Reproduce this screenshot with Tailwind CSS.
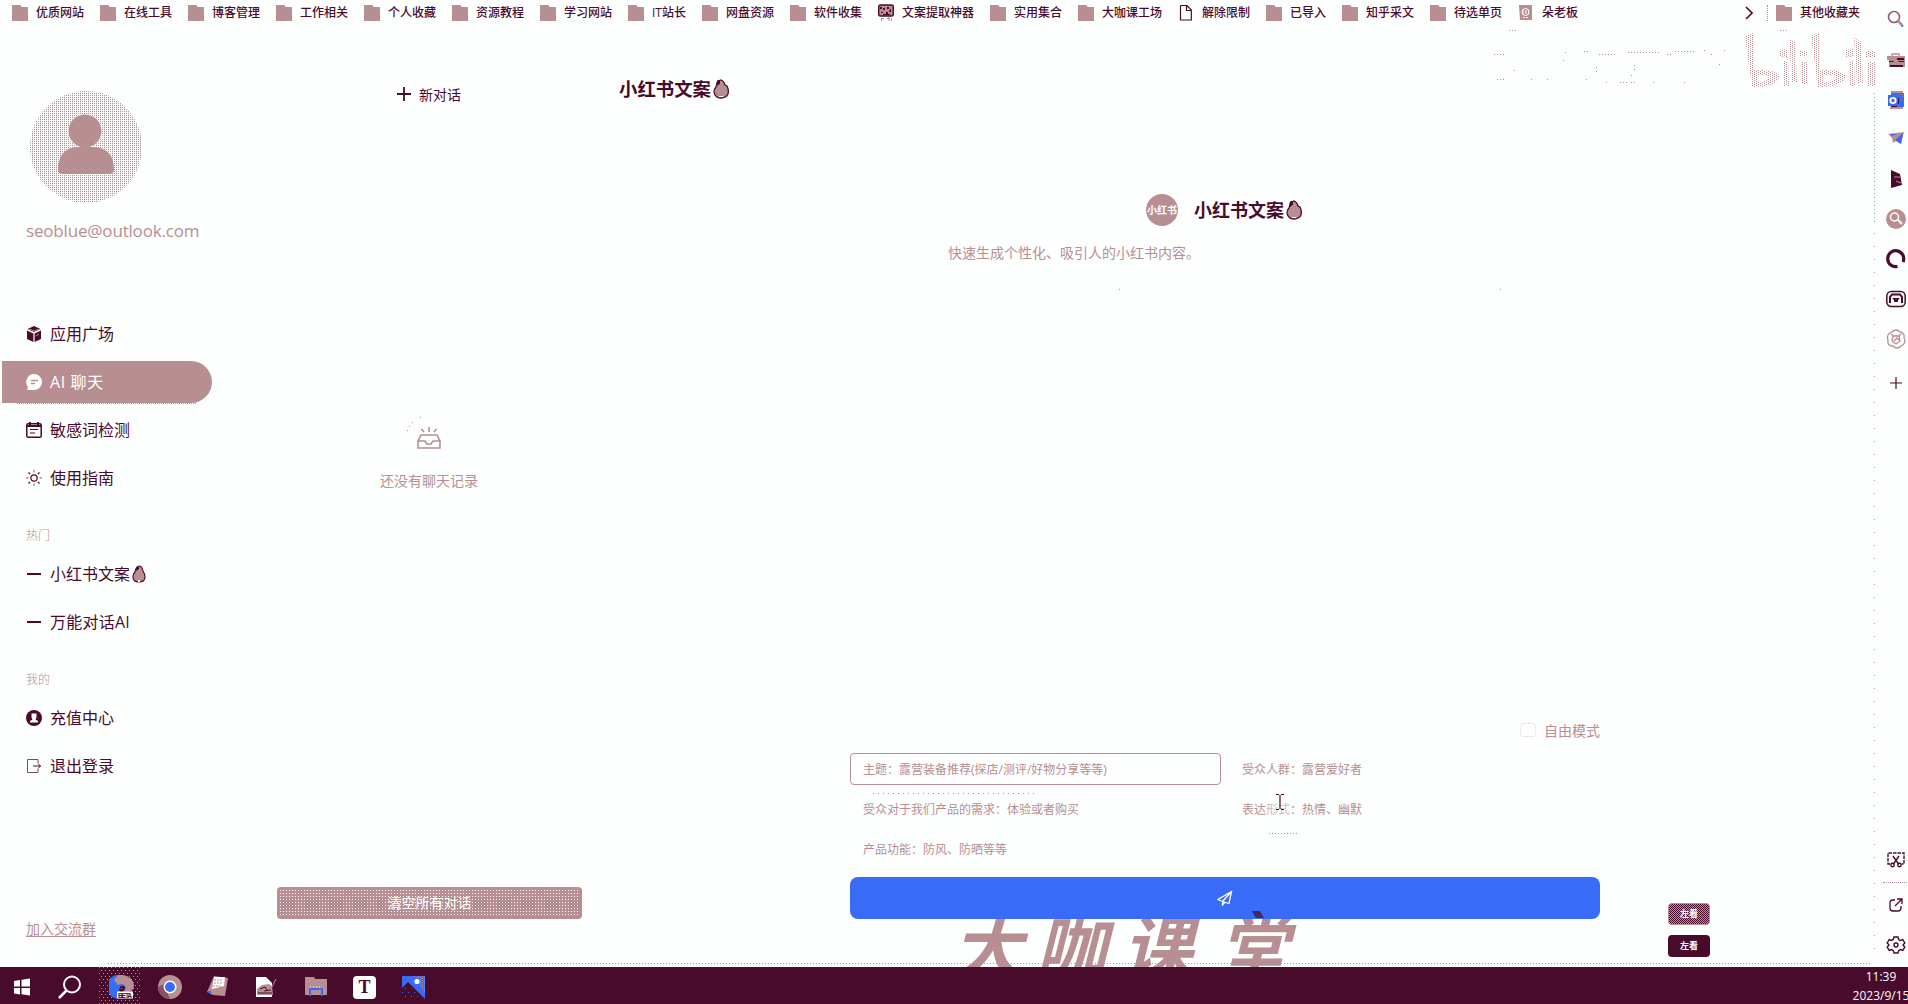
<!DOCTYPE html>
<html lang="zh-CN">
<head>
<meta charset="utf-8">
<title>小红书文案</title>
<script src="https://cdn.jsdelivr.net/npm/@tailwindcss/browser@4"></script>
</head>
<body class="w-[1908px] h-[1004px] overflow-hidden bg-[#fdfefe] text-[#490b2b] font-['Open_Sans','Noto_Sans_CJK_SC',sans-serif]">
<svg class="absolute w-0 h-0" aria-hidden="true">
  <defs>
    <pattern id="dots" width="4" height="2" patternUnits="userSpaceOnUse"><path d="M0 0h1v1H0zM2 1h1v1H2z" fill="#b78f92"/></pattern>
    <pattern id="mesh" width="2" height="2" patternUnits="userSpaceOnUse"><path d="M0 0h1v1H0z" fill="#b78f92"/></pattern>
    <pattern id="check" width="2" height="2" patternUnits="userSpaceOnUse"><path d="M0 0h1v1H0zM1 1h1v1H1z" fill="#b78f92"/></pattern>
    <pattern id="holes" width="3" height="3" patternUnits="userSpaceOnUse"><path d="M1 1h1v1H1z" fill="#fdfefe"/></pattern>
    <pattern id="grain" width="4" height="6" patternUnits="userSpaceOnUse"><path d="M0 0h1v1H0zM2 3h1v1H2z" fill="#b78f92"/></pattern>
    <pattern id="blue" width="6" height="8" patternUnits="userSpaceOnUse"><path d="M0 0h1v1H0zM3 4h1v1H3z" fill="#386cf7"/></pattern>
    <symbol id="folder" viewBox="0 0 16 17"><path d="M0 1h8l2 2h6v14H0z" fill="#b78f92"/></symbol>
    <symbol id="egg" viewBox="0 0 16 20"><path d="M5 2L8 1q3 1 4 5l2 1q2 4 1 8-2 4-7 4-6 0-7-6 0-3 2-5z" fill="#b78f92" stroke="#490b2b" stroke-width="1.3"/><path d="M4 1.500h3v3L4 7 3 6z" fill="#490b2b"/><path d="M6 17h4v1H6z" fill="#fdfefe"/></symbol>
    <symbol id="egg2" viewBox="0 0 14 18"><path d="M7 1q3 0 4 5 2 3 2 6 0 5-6 5t-6-5q0-3 2-5Q4 1 7 1z" fill="#b78f92" stroke="#490b2b" stroke-width="1.2"/><path d="M4 2h3v2L4 6z" fill="#490b2b"/><path d="M6 15h2v2H6z" fill="#fdfefe"/></symbol>
  </defs>
</svg>
<div class="flex flex-col h-full">
<div class="relative flex h-[967px] overflow-hidden">
  <div class="flex flex-col w-[1875px]">
    <header class="flex items-center h-[25px] pl-3 gap-4 text-[12px] leading-[24px] font-medium whitespace-nowrap">
      <div class="flex items-center gap-2"><svg class="w-4 h-[17px]"><use href="#folder"/></svg><span class="w-12">优质网站</span></div>
      <div class="flex items-center gap-2"><svg class="w-4 h-[17px]"><use href="#folder"/></svg><span class="w-12">在线工具</span></div>
      <div class="flex items-center gap-2"><svg class="w-4 h-[17px]"><use href="#folder"/></svg><span class="w-12">博客管理</span></div>
      <div class="flex items-center gap-2"><svg class="w-4 h-[17px]"><use href="#folder"/></svg><span class="w-12">工作相关</span></div>
      <div class="flex items-center gap-2"><svg class="w-4 h-[17px]"><use href="#folder"/></svg><span class="w-12">个人收藏</span></div>
      <div class="flex items-center gap-2"><svg class="w-4 h-[17px]"><use href="#folder"/></svg><span class="w-12">资源教程</span></div>
      <div class="flex items-center gap-2"><svg class="w-4 h-[17px]"><use href="#folder"/></svg><span class="w-12">学习网站</span></div>
      <div class="flex items-center gap-2"><svg class="w-4 h-[17px]"><use href="#folder"/></svg><span class="w-[34px]">IT站长</span></div>
      <div class="flex items-center gap-2"><svg class="w-4 h-[17px]"><use href="#folder"/></svg><span class="w-12">网盘资源</span></div>
      <div class="flex items-center gap-2"><svg class="w-4 h-[17px]"><use href="#folder"/></svg><span class="w-12">软件收集</span></div>
      <div class="flex items-center gap-2"><svg class="w-4 h-[17px]" viewBox="0 0 16 17"><rect x=".7" y="1" width="14.6" height="11" rx="1.5" fill="#b78f92" stroke="#490b2b" stroke-width="1.4"/><path d="M2 3h2v2H2zM5 4h2v2H5zM9 3h2v2H9zM12 5h1v3h-2zM3 8h2v1H3zM8 8h2v2H8zM5 10h7v1H5z" fill="#490b2b"/><path d="M3.500 14v3M3 14.500h3M9 14.500h3M11 13v4M13.500 14v3" stroke="#b78f92"/></svg><span class="w-[72px]">文案提取神器</span></div>
      <div class="flex items-center gap-2"><svg class="w-4 h-[17px]"><use href="#folder"/></svg><span class="w-12">实用集合</span></div>
      <div class="flex items-center gap-2"><svg class="w-4 h-[17px]"><use href="#folder"/></svg><span class="w-[60px]">大咖课工场</span></div>
      <div class="flex items-center gap-2"><svg class="w-4 h-[17px]" viewBox="0 0 16 17"><path d="M3 1.500h6L13.300 6v10H2.500V2zM8.500 1.500V6.500H13" fill="none" stroke="#490b2b" stroke-width="1.2"/></svg><span class="w-12">解除限制</span></div>
      <div class="flex items-center gap-2"><svg class="w-4 h-[17px]"><use href="#folder"/></svg><span class="w-9">已导入</span></div>
      <div class="flex items-center gap-2"><svg class="w-4 h-[17px]"><use href="#folder"/></svg><span class="w-12">知乎采文</span></div>
      <div class="flex items-center gap-2"><svg class="w-4 h-[17px]"><use href="#folder"/></svg><span class="w-12">待选单页</span></div>
      <div class="flex items-center gap-2"><svg class="w-4 h-[17px]" viewBox="0 0 16 17"><path d="M1 1h13v15H2z" fill="#b78f92"/><circle cx="7.500" cy="8" r="3.500" fill="none" stroke="#fdfefe"/><path d="M4 7h7M4 9h7M5 13.500h6" stroke="#fdfefe" stroke-dasharray="2 1"/></svg><span class="w-9">朵老板</span></div>
      <div class="flex items-center ml-auto pr-[14px]">
        <svg class="w-2 h-3.5" viewBox="0 0 8 14"><path d="M1 1l6 6-6 6" fill="none" stroke="#490b2b" stroke-width="1.6"/></svg>
        <span class="h-4 ml-[14px] mr-2 border-l border-dotted border-[#b78f92]"></span>
        <svg class="w-4 h-[17px] mr-2"><use href="#folder"/></svg><span class="w-[61px]">其他收藏夹</span>
      </div>
    </header>
    <div class="flex flex-1 min-h-0">
      <aside class="flex flex-col w-[214px] pt-[66px]">
        <svg class="w-28 h-28 ml-[30px]" viewBox="0 0 112 112"><circle cx="56" cy="56" r="56" fill="url(#mesh)"/><circle cx="56" cy="56" r="56" fill="url(#dots)" opacity=".25"/><ellipse cx="55" cy="40" rx="17" ry="17" fill="#fdfefe"/><circle cx="55" cy="40" r="16.500" fill="#b78f92"/><path d="M28 79q0-22 20-23h16q20 1 20 23 0 4-5 4H33q-5 0-5-4z" fill="#b78f92"/></svg>
        <div class="mt-[16px] ml-[26px] h-6 leading-6 text-[17px] text-[#b78f92] whitespace-nowrap tracking-[-0.18px]">seoblue@outlook.com</div>
        <nav class="mt-[67px] text-[16px] whitespace-nowrap">
          <a class="flex items-center h-12 pl-[26px] gap-2"><svg class="w-4 h-4" viewBox="0 0 16 16"><path d="M8 0l6.500 3L8 6 1.500 3zM1 4.500l6.400 3V16L1 13zM15 4.500l-6.400 3V16l6.400-3z" fill="#490b2b"/><path d="M3 3l5 2 5-2M10 10l3-2" stroke="#b78f92" fill="none"/></svg>应用广场</a>
          <a class="flex items-center w-[210px] h-[42px] my-[3px] ml-0.5 pl-[24px] gap-2 rounded-r-full bg-[#b78f92] text-[#fdfefe]"><svg class="w-4 h-4" viewBox="0 0 16 16"><path d="M8 0a8 8 0 1 1 0 16H1l1-3A8 8 0 0 1 8 0z" fill="#fdfefe"/><path d="M5 6.500h7M5 9.500h4" stroke="#b78f92" stroke-width="1.300"/></svg><span class="tracking-[0.6px]">AI 聊天</span></a>
          <a class="flex items-center h-12 pl-[26px] gap-2"><svg class="w-4 h-4" viewBox="0 0 16 16" fill="none" stroke="#490b2b" stroke-width="1.500"><rect x=".8" y="1.800" width="14.400" height="13.400" rx="1.500"/><path d="M1 4h14M4 0v4M12 0v4" stroke-width="2"/><path d="M4 7.500h8M4 11h5" stroke-width="1.200"/></svg>敏感词检测</a>
          <a class="flex items-center h-12 pl-[26px] gap-2"><svg class="w-4 h-4" viewBox="0 0 16 16" fill="none" stroke="#490b2b" stroke-width="1.200"><circle cx="8" cy="8" r="3.200"/><path d="M8 0v2.500M8 13.500V16M0 8h2.500M13.500 8H16" stroke="#b78f92" stroke-width="1.500"/><path d="M2.500 2.500l1.500 1.500M12 12l1.500 1.500M2.500 13.500L4 12M12 4l1.500-1.500"/></svg>使用指南</a>
          <p class="h-12 pt-[22px] pl-[26px] leading-[24px] text-[12px] font-light text-[#b78f92]">热门</p>
          <a class="flex items-center h-12 pl-[27px] gap-[9px]"><span class="w-[14px] h-[2px] bg-[#490b2b]"></span><span class="flex items-center gap-0.5">小红书文案<svg class="w-3.5 h-[18px]"><use href="#egg2"/></svg></span></a>
          <a class="flex items-center h-12 pl-[27px] gap-[9px]"><span class="w-[14px] h-[2px] bg-[#490b2b]"></span><span class="tracking-[0.25px]">万能对话AI</span></a>
          <p class="h-12 pt-[22px] pl-[26px] leading-[24px] text-[12px] font-light text-[#b78f92]">我的</p>
          <a class="flex items-center h-12 pl-[26px] gap-2"><svg class="w-4 h-4" viewBox="0 0 16 16"><circle cx="8" cy="8" r="8" fill="#490b2b"/><path d="M5.500 3.500h5v4l-1 2 2.500 1.500v1.500H4V11l2.500-1.500-1-2z" fill="#fdfefe"/></svg>充值中心</a>
          <a class="flex items-center h-12 pl-[26px] gap-2"><svg class="w-4 h-4" viewBox="0 0 16 16" fill="none" stroke="#490b2b" stroke-width="1"><path d="M12 5V1.500H1.500v13H12V11" stroke="#7d4c60"/><path d="M7 8h7.500M12 5.500L14.500 8 12 10.500"/></svg>退出登录</a>
        </nav>
        <a class="mt-auto mb-[25px] ml-[26px] h-[26px] leading-[26px] text-[14px] text-[#b78f92] underline underline-offset-2">加入交流群</a>
      </aside>
      <section class="flex flex-col items-center w-[430px]">
        <button class="flex items-center gap-[8px] mt-[56px] h-[26px] text-[14px]"><svg class="w-3.5 h-3.5" viewBox="0 0 14 14"><path d="M7 0v14M0 7h14" stroke="#490b2b" stroke-width="1.800"/></svg>新对话</button>
        <svg class="w-6 h-[22px] mt-[320px]" viewBox="0 0 24 22" fill="none" stroke="#b78f92" stroke-width="1.600"><path d="M12 0v5M4.500 2l2.500 3M19.500 2L17 5"/><path d="M1 21V14l3-6h16l3 6v7zM1 14h7l2 3h4l2-3h7"/></svg>
        <p class="mt-[19px] h-[26px] leading-[26px] text-[14px] text-[#b78f92]">还没有聊天记录</p>
        <button class="relative flex items-center justify-center w-[305px] h-8 mt-auto mb-12 ml-px rounded bg-[#b78f92] text-[#fdfefe] text-[14px]"><svg class="absolute left-0.5 top-0.5 w-[301px] h-[28px]"><rect width="301" height="28" fill="url(#holes)"/></svg><span class="relative pb-0.5">清空所有对话</span></button>
      </section>
      <main class="flex flex-col flex-1">
        <h1 class="self-start flex items-center gap-[2px] mt-[50px] h-[28px] -ml-[25px] font-bold text-[18.4px]">小红书文案<svg class="w-4 h-5"><use href="#egg"/></svg></h1>
        <div class="flex items-center w-[158px] mt-[91px] ml-[502px] h-8 whitespace-nowrap font-bold text-[18px]">
          <span class="flex items-center justify-center shrink-0 w-8 h-8 mr-4 rounded-full bg-[#b78f92] text-[#fdfefe] text-[10px] leading-none">小红书</span>小红书文案<svg class="w-4 h-5 ml-0.5 shrink-0"><use href="#egg"/></svg>
        </div>
        <p class="mt-[14px] h-[26px] leading-[26px] ml-[304px] text-[14px] text-[#b78f92]">快速生成个性化、吸引人的小红书内容。</p>
        <div class="flex flex-col w-[750px] ml-[206px] mt-auto mb-12 relative">
          <label class="flex self-end items-center gap-2 mb-[9px] h-7 text-[14px] text-[#b78f92]"><span class="w-4 h-3.5 border border-dotted border-[#e2d2d3] rounded"></span>自由模式</label>
          <div class="grid grid-cols-[371px_371px] gap-x-2 gap-y-2 text-[12px] text-[#b78f92] font-normal">
            <div class="flex items-center h-8 px-3 pt-0.5 rounded border border-[#b78f92]">主题：露营装备推荐(探店/测评/好物分享等等)</div>
            <div class="flex items-center h-8 px-[13px] pt-0.5">受众人群：露营爱好者</div>
            <div class="flex items-center h-8 px-[13px] pt-0.5">受众对于我们产品的需求：体验或者购买</div>
            <div class="flex items-center h-8 px-[13px] pt-0.5">表达<span class="opacity-60">形式</span>：热情、幽默</div>
            <div class="flex items-center h-8 px-[13px] pt-0.5">产品功能：防风、防晒等等</div>
          </div>
          <button class="relative z-10 flex items-center justify-center h-[42px] mt-3 rounded-lg bg-[#386cf7]"><svg class="w-4 h-4" viewBox="0 0 16 16" fill="none" stroke="#fdfefe" stroke-width="1.300"><path d="M14.500 1.500L1 9.500l4.500 2 6.500 2zM5.500 11.500l9-10M5.500 11.500V15l2.500-2.800"/></svg></button>
          <svg class="absolute left-[23px] top-[77px] w-[162px] h-px"><path d="M0 .5h162" stroke="#b78f92" stroke-dasharray="1 4"/></svg>
          <svg class="absolute left-[419px] top-[117px] w-[28px] h-px"><path d="M0 .5h28" stroke="#b78f92" stroke-dasharray="1 2"/></svg>
          <svg class="absolute left-[426px] top-[78px] w-2 h-4" viewBox="0 0 8 16"><path d="M0 .5h3M5 .5h3M4 1v14M0 15.500h3M5 15.500h3" stroke="#490b2b" stroke-width="1.200"/></svg>
        </div>
      </main>
    </div>
  </div>
  <aside class="flex flex-col items-center w-[33px] pl-[9px] pt-[9px]">
    <svg class="w-5 h-5" viewBox="0 0 20 20"><circle cx="8" cy="8" r="5.500" fill="none" stroke="#8f5f6e" stroke-width="1.600"/><path d="M12 12l4 4" stroke="#b78f92" stroke-width="2.500"/><path d="M15.500 16l1.500 1.500" stroke="#386cf7" stroke-width="2"/></svg>
    <svg class="w-5 h-5 mt-[21px]" viewBox="0 0 20 20"><path d="M6 7V4h7v3" stroke="#b78f92" fill="none" stroke-width="1.300"/><path d="M1 6h18v11H3V10H1z" fill="#b78f92"/><path d="M11 8h7v2h-7zM3 11h4l1 1h4l1-1h5v1H3zM4 15h13v2H4z" fill="#490b2b"/></svg>
    <svg class="w-5 h-5 mt-[20px]" viewBox="0 0 20 20"><path d="M5 1h12v3H5zM4 17h13v2H4z" fill="#b78f92"/><path d="M5 3h13v14H5zM2 5h10v11H2z" fill="#386cf7"/><circle cx="7" cy="10.500" r="2.700" fill="none" stroke="#fdfefe" stroke-width="1.800"/><path d="M12.500 8v6M5 16.500h6" stroke="#490b2b"/><path d="M13 3h5v5z" fill="url(#mesh)"/></svg>
    <svg class="w-5 h-5 mt-[18px]" viewBox="0 0 20 20"><path d="M2 6l16-2-3 12-5-3-3 2-1-5z" fill="#b78f92"/><path d="M4 6h7l-5 2zM9 12l8-7-2 11z" fill="#386cf7"/></svg>
    <svg class="w-5 h-5 mt-[21px]" viewBox="0 0 20 20"><path d="M5 1l9 4 2 11-11 3z" fill="#490b2b"/><path d="M8 8h6M10 12l5 2" stroke="#b78f92" fill="none"/></svg>
    <svg class="w-5 h-5 mt-[20px]" viewBox="0 0 20 20"><circle cx="10" cy="10" r="10" fill="#b78f92"/><circle cx="8.500" cy="8" r="4" fill="none" stroke="#fdfefe" stroke-width="1.500"/><path d="M12 11l4 4" stroke="#fdfefe" stroke-width="2"/></svg>
    <svg class="w-5 h-5 mt-[20px]" viewBox="0 0 20 20"><path d="M11.500 17.500A8 8 0 1 1 17 13" fill="none" stroke="#490b2b" stroke-width="3.200"/></svg>
    <svg class="w-5 h-5 mt-[20px]" viewBox="0 0 20 20"><rect x=".8" y="2.500" width="18.400" height="15" rx="4.500" fill="none" stroke="#490b2b" stroke-width="1.500"/><path d="M4 14V8l2-2.500h8L16 8v6" fill="none" stroke="#490b2b" stroke-width="2"/><path d="M6 9h8l-2 2v2h-4v-2z" fill="#490b2b"/></svg>
    <svg class="w-5 h-5 mt-[20px]" viewBox="0 0 20 20" fill="none" stroke="#b78f92" stroke-width="1.300"><path d="M6 3q4-4 8 0 5 1 4 6 3 5-3 8-4 4-8 0-6 0-5-6-2-6 4-8z"/><path d="M7 7h6l1 5-4 3-4-3zM8 12l3-3 2 2M5 5l2 2M15 5l-2 2"/></svg>
    <svg class="w-3 h-3 mt-[28px]" viewBox="0 0 12 12"><path d="M6 0v12M0 6h12" stroke="#490b2b" stroke-width="1.200"/></svg>
    <div class="flex flex-col items-center mt-auto mb-[12px]">
      <svg class="w-5 h-5" viewBox="0 0 20 20" fill="none" stroke="#490b2b" stroke-width="1.400"><path d="M4 14H2V3h16v11h-2" stroke-dasharray="3.500 1"/><path d="M7 6l5.500 8M13 6l-5.500 8"/><circle cx="6.500" cy="15" r="1.700"/><circle cx="13.500" cy="15" r="1.700"/></svg>
      <span class="w-[26px] mt-[12px] border-t border-dotted border-[#b78f92]"></span>
      <svg class="w-5 h-5 mt-[12px]" viewBox="0 0 20 20" fill="none" stroke="#490b2b" stroke-width="1.300"><path d="M9 5H7q-3 0-3 3v5q0 3 3 3h5q3 0 3-3v-2M9 11l7-7M11 4h5v5"/></svg>
      <svg class="w-5 h-5 mt-[20px]" viewBox="0 0 20 20" fill="none" stroke="#490b2b" stroke-width="1.400"><circle cx="10" cy="10" r="2"/><path d="M8 2h4l.7 2.500 1.600 1 2.500-.8 2 3.300-1.800 2 1.800 2-2 3.400-2.500-.8-1.600 1L12 18H8l-.7-2.400-1.600-1-2.500.8-2-3.400 1.800-2-1.800-2 2-3.400 2.500.8 1.600-1z"/></svg>
    </div>
  </aside>

  <!-- Translucent overlays: video watermarks and page edge -->
  <div class="absolute left-[952px] top-[898px] flex whitespace-nowrap text-[#b78f92] font-bold text-[70px] leading-[92px] italic font-['Noto_Sans_CJK_SC',sans-serif]"><span class="w-[84px]">大</span><span class="w-[86px]">咖</span><span class="w-[96px]">课</span><span>堂</span></div>
  <svg class="absolute left-[1252px] top-[910px] w-3 h-2 z-20"><path d="M0 1h8l4 7H4z" fill="#490b2b" opacity=".7"/></svg>
  <svg class="absolute left-[1480px] top-[25px] w-[396px] h-[80px]" viewBox="0 0 396 80">
    <path d="M265 11l9-3v37h8q14 0 18 6-4 12-28 11zM278 50v7q8 0 13-5-5-3-13-2z" fill="url(#dots)" fill-rule="evenodd"/>
    <path d="M331 11l9-3v37h8q14 0 18 6-4 12-28 11zM344 50v7q8 0 13-5-5-3-13-2z" fill="url(#dots)" fill-rule="evenodd"/>
    <path d="M299 25l8-1v8h-7zM303 36h5l1 25h-5zM309 13l6 4 2 40h-5zM319 26h8v5h-8zM322 37h5v22h-5zM365 25l8-1v8h-7zM369 36h5l1 25h-5zM374 13l7 4 2 41h-6zM385 26h10v6h-10zM388 37h7v24h-7z" fill="url(#dots)"/>
    <path d="M14 29.500h10M17 54.500h8M29 5.500h7M104 26.500h4M119 29.500h18M148 27.500h32M187 29.500h6M195 26.500h19M300 5.500h7M140 57.500h7M151 57.500h5" stroke="#b78f92" stroke-dasharray="1 2" fill="none"/>
    <path d="M34.500 45v1M51.500 54v1M67.500 54v1M83.500 35v1M85.500 27v1M116.500 42v1M116.500 46v1M154.500 40v1M154.500 44v1M151.500 50v1M173.500 57v1M204.500 57v1M224.500 25v1M231.500 29v1M239.500 39v1M244.500 25v1M126.500 57v1M106.500 54v1" stroke="#b78f92"/>
  </svg>
  <svg class="absolute left-[1874px] top-[93px] w-px h-[868px]"><path d="M.5 0v130" stroke="#b78f92" stroke-dasharray="1 3"/><path d="M.5 140v728" stroke="#b78f92" stroke-dasharray="1 12"/></svg>
  <svg class="absolute left-[108px] top-[963px] w-[1764px] h-px"><path d="M0 .5h1764" stroke="#b78f92" stroke-dasharray="1 2"/></svg>
  <svg class="absolute left-0 top-[403px] w-[200px] h-[2px]"><path d="M17 .5h180" stroke="#b78f92" stroke-dasharray="1 1"/></svg>
  <svg class="absolute left-[406px] top-[416px] w-[16px] h-4"><path d="M1 14h1v1H1zM3 10h1v1H3zM6 6h1v1H6zM14 1h1v1h-1z" fill="#b78f92"/></svg>
  <svg class="absolute left-[1118px] top-[288px] w-[384px] h-[2px]"><path d="M1 1h1v1H1zM382 1h1v1h-1z" fill="#b78f92"/></svg>
  <div class="absolute left-[1668px] top-[903px] flex flex-col gap-2.5 text-[9px] font-bold text-[#fdfefe]">
    <span class="relative flex items-center justify-center w-[42px] h-[22px] rounded overflow-hidden border border-[#b78f92] bg-[#490b2b]"><svg class="absolute inset-0 w-full h-full"><rect width="42" height="22" fill="url(#check)"/></svg><span class="relative">左看</span></span>
    <span class="flex items-center justify-center w-[42px] h-[22px] rounded bg-[#490b2b]">左看</span>
  </div>
</div>
<footer class="flex items-center h-[37px] pl-[10px] bg-[#490b2b] text-[#fdfefe] overflow-hidden">
  <div class="flex items-center pt-[3px]">
    <svg class="w-6 h-6" viewBox="0 0 24 24" fill="#fdfefe"><path d="M4 6l6-1v6.500H4zM11.500 4.700L20 3.500v8h-8.500zM4 13h6v6.500l-6-1zM11.500 13H20v7.500l-8.500-1.200z"/></svg>
    <svg class="w-6 h-6 ml-[24px]" viewBox="0 0 24 24" fill="none" stroke="#fdfefe" stroke-width="2"><circle cx="14" cy="9.500" r="8"/><path d="M8.500 15.500L1 23" stroke-width="2.500"/></svg>
    <div class="relative flex items-center justify-center w-[42px] h-[37px] ml-[17px] -mt-[3px]"><svg class="absolute inset-0 w-full h-full"><rect width="42" height="37" fill="url(#grain)"/></svg>
      <svg class="relative w-[26px] h-6 ml-1 mt-[3px]" viewBox="0 0 26 24"><path d="M12 0A12 12 0 1 0 14 23l-3-4q-2-5 1-8 3-1 4 1l-1 4 5 1q6-4 3-11Q19 0 12 0z" fill="#386cf7"/><path d="M9 0q14-1 16 10 0 6-6 7h-4l2-4q-2-6-8-3L5 5z" fill="#b78f92"/><rect x="8" y="16.500" width="16" height="7" fill="#fdfefe"/><text x="9" y="22.500" font-size="6.500" font-weight="700" fill="#490b2b" font-family="Liberation Sans, sans-serif" textLength="14">BETA</text></svg></div>
    <svg class="w-6 h-6 ml-[17px]" viewBox="0 0 24 24"><circle cx="12" cy="12" r="12" fill="#b78f92"/><path d="M0 12l8-4 1 9 3 7Q1 23 0 12z" fill="#490b2b" opacity=".45"/><circle cx="12" cy="12" r="6.500" fill="#fdfefe"/><circle cx="12" cy="12" r="5" fill="#386cf7"/></svg>
    <svg class="w-6 h-6 ml-[23px]" viewBox="0 0 24 24"><path d="M9 1l14 2-3 18-12-1-6-3z" fill="#b78f92"/><path d="M9 2h11l-1 9-12 3z" fill="#fdfefe"/><path d="M9 5h9M9 8h8M8 11h8" stroke="#b78f92" stroke-dasharray="2 1"/><path d="M3 16h3v2H3z" fill="#386cf7"/></svg>
    <svg class="w-6 h-6 ml-[25px]" viewBox="0 0 24 24"><path d="M2 2h10l6 6v14H2z" fill="#fdfefe"/><path d="M3 14l5-4 7-1 3 2 1 9H3z" fill="#b78f92"/><path d="M6 14l5-2 2 3M4 18h14M10 16l7-1" stroke="#490b2b" fill="none"/><path d="M18 12l4-8" stroke="#b78f92"/></svg>
    <svg class="w-6 h-6 ml-[26px]" viewBox="0 0 24 24"><path d="M1 2h9l1 2h12v16H1z" fill="#b78f92"/><path d="M6 21v-7h12v7" fill="none" stroke="#386cf7" stroke-width="2"/><path d="M6 12h12" stroke="#fdfefe" stroke-dasharray="1 2"/></svg>
    <span class="flex items-center justify-center w-[23px] h-[23px] ml-[25px] rounded bg-[#fdfefe] text-[#490b2b] text-[18px] leading-none font-bold font-['Liberation_Serif',serif]">T</span>
    <svg class="w-[23px] h-[23px] ml-[26px]" viewBox="0 0 23 23"><path d="M0 0h23v23z" fill="#386cf7"/><path d="M0 0h12L0 12z" fill="#386cf7"/><path d="M12 0h11v18z" fill="url(#dots)"/><path d="M0 13l6-5 6 5 8 10H0z" fill="#490b2b"/><path d="M0 10h14l7 13H0z" fill="url(#blue)"/><circle cx="15" cy="5.500" r="2.600" fill="#fdfefe"/></svg>
  </div>
  <div class="flex flex-col items-center w-[60px] shrink-0 ml-auto -mr-[3px] text-[12px] leading-[19px] whitespace-nowrap"><span>11:39</span><span>2023/9/15</span></div>
</footer>
</div>
</body>
</html>
